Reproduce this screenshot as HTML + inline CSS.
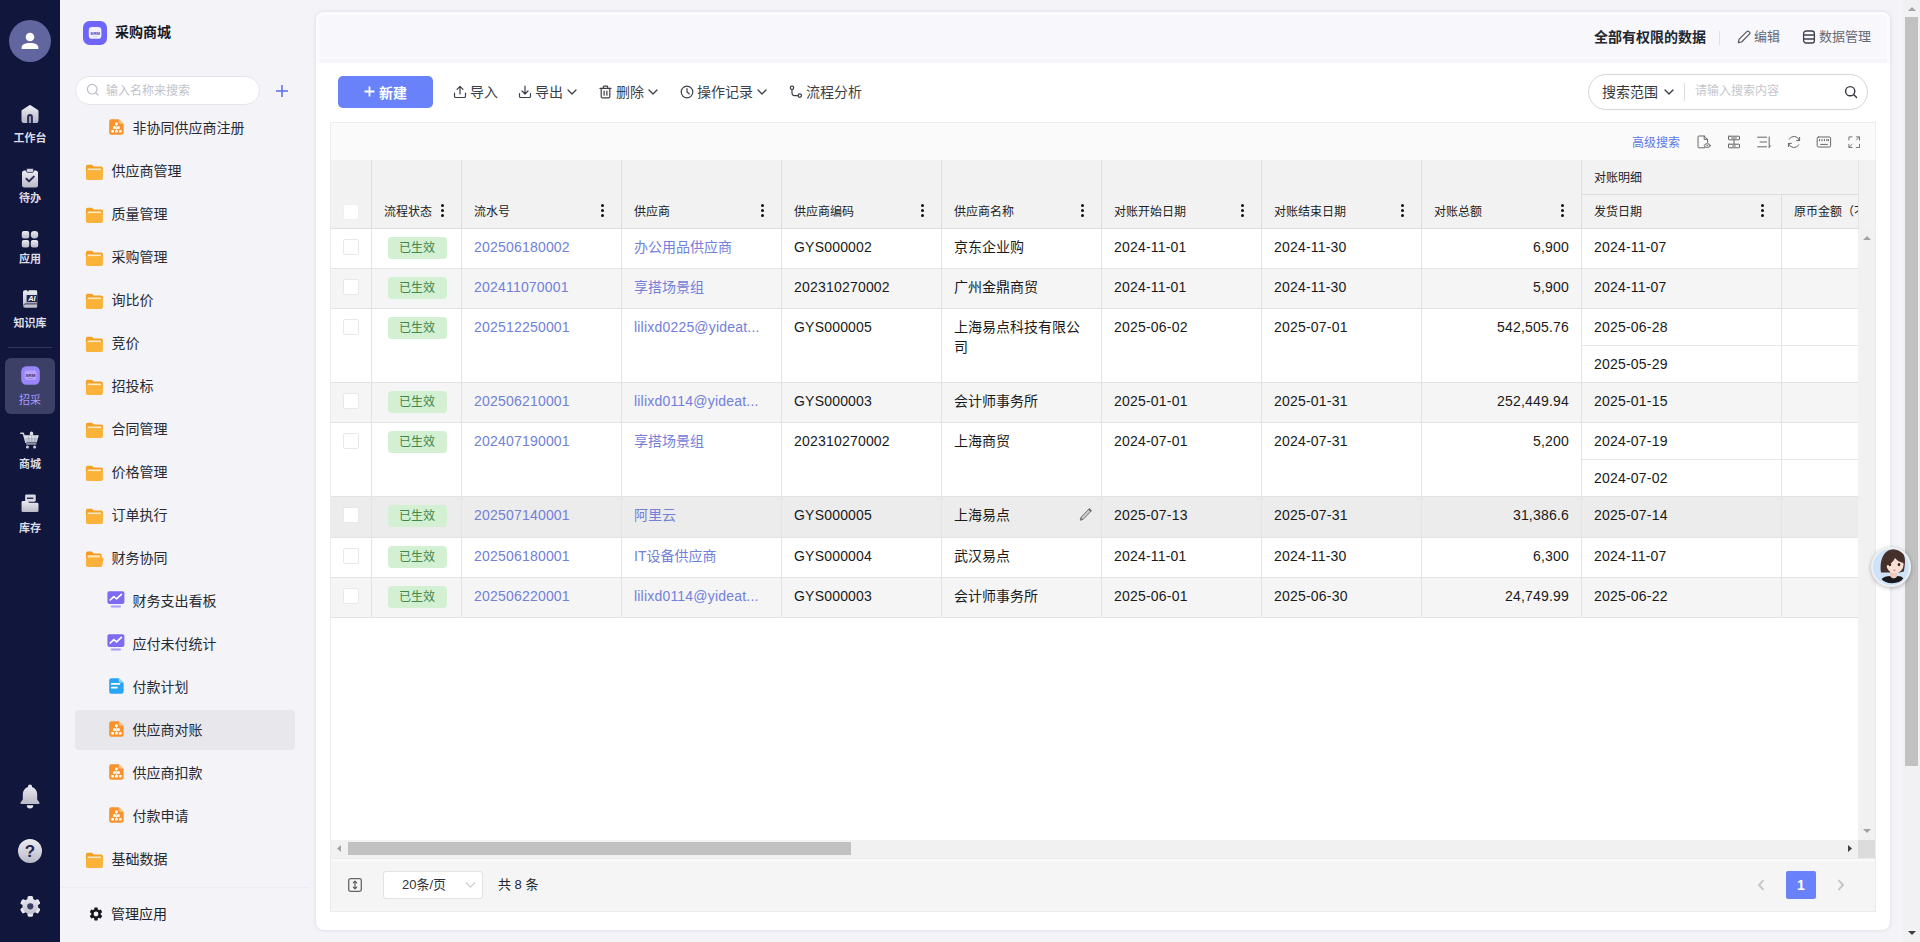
<!DOCTYPE html>
<html lang="zh-CN">
<head>
<meta charset="utf-8">
<title>采购商城 - 供应商对账</title>
<style>
*{box-sizing:border-box;margin:0;padding:0}
html,body{width:1920px;height:942px;overflow:hidden}
body{position:relative;background:#f3f3f8;font-family:"Liberation Sans","Noto Sans CJK SC",sans-serif;font-size:14px;color:#1f2329}
.abs{position:absolute}
svg{display:block}
/* ---------- dark rail ---------- */
#rail{position:absolute;left:0;top:0;width:60px;height:942px;background:#11163c}
#rail .avatar{position:absolute;left:9px;top:20px;width:42px;height:42px;border-radius:50%;background:#61669f}
#rail .item{position:absolute;left:0;width:60px;text-align:center;color:#dcdde7;font-size:11px;font-weight:bold;line-height:14px}
#rail .item svg{margin:0 auto 3px}
#rail .active{position:absolute;left:5px;top:358px;width:50px;height:56px;border-radius:6px;background:#3d4066}
#rail .sep{position:absolute;left:8px;top:347px;width:44px;height:1px;background:#33375f}
/* ---------- tree sidebar ---------- */
#side{position:absolute;left:60px;top:0;width:250px;height:942px;background:#f3f3f8}
#side .logo{position:absolute;left:23px;top:21px;width:24px;height:24px;border-radius:6.500px;background:#6e66fb}
#side .title{position:absolute;left:55px;top:21px;font-size:14px;font-weight:bold;color:#15171f;line-height:22px}
#side .search{position:absolute;left:15px;top:75.500px;width:184.500px;height:29px;border-radius:15px;background:#fff;border:1px solid #e4e5ec}
#side .search span{position:absolute;left:30px;top:0;line-height:28px;font-size:12px;color:#c0c3cc}
#side .node{position:absolute;left:15px;width:220px;height:40px;line-height:40px;font-size:14px;color:#272a32;border-radius:4px}
#side .node .ic{position:absolute;top:11.500px}
#side .node .tx{position:absolute;top:0}
#side .lvl1 .ic{left:10.300px;top:13.200px}
#side .lvl1 .tx{left:36.600px}
#side .lvl2 .ic{left:33.600px;top:10.800px;width:15.300px;height:16.300px}
#side .lvl2 .ic.pp{left:32.200px;top:10.400px;width:18px;height:17px}
#side .lvl2 .tx{left:57.600px}
#side .sel{background:#e7e7ec}
#side .bottom{position:absolute;left:0;top:887px;width:250px;height:55px;border-top:1px solid #ececf2}
/* ---------- main card ---------- */
#card{position:absolute;left:316px;top:12px;width:1574px;height:918px;background:#fff;border-radius:8px;box-shadow:0 0 4px rgba(40,42,80,.13)}
#card .head{position:absolute;left:0;top:0;width:100%;height:51px;background:#f7f7fb;border-radius:8px 8px 0 0;border:3px solid #fcfcfe;border-bottom:0;background:linear-gradient(#f7f7fc 0,#f7f7fc 42px,#fbfbfe 42px,#fbfbfe 44.500px,#f6f6fa 44.500px,#f6f6fa 100%)}
.tb{position:absolute;top:64px;height:31px;line-height:31px;font-size:14px;color:#3a3d45;white-space:nowrap}
.tb svg{display:inline-block;vertical-align:-2px;margin-right:3px}
#grid{position:absolute;left:14px;top:110px;width:1546px;height:790px;border:1px solid #ececec;background:#fff}
#grid .gt{position:absolute;left:0;top:0;width:100%;height:37px;background:#fafafa}
#grid .hd{position:absolute;left:0;top:37px;width:1544px;height:69px;background:#f2f2f2;border-bottom:1px solid #dedede}
.hc{position:absolute;top:0;height:68px;border-right:1px solid #dedede}
.hc .l{position:absolute;left:12px;top:44px;font-size:12px;line-height:16px;color:#222;white-space:nowrap}
.hc .m{position:absolute;right:16px;top:44px;width:4px;height:14px}
.hc .m i{display:block;width:3px;height:3px;border-radius:50%;background:#111;margin-bottom:2px}
.row{position:absolute;left:0;width:1527px;border-bottom:1px solid #e3e3e3;background:#fff}
.row.alt{background:#f5f5f5}
.row.hov{background:#ececec}
.c{position:absolute;top:0;height:100%;border-right:1px solid #e3e3e3;font-size:14px;line-height:20px;padding:8px 12px 0 12px;color:#1a1a1a;white-space:nowrap;overflow:hidden}
.c.r{text-align:right}
.n{letter-spacing:.200px}
.c.lk{color:#7280da}
.cb{position:absolute;left:12px;top:10px;width:16px;height:16px;border:1px solid #e8e8e8;border-radius:2px;background:#fff}
.tag{position:absolute;left:15.500px;top:8px;width:59px;height:22px;line-height:23px;border-radius:4px;background:#d3f1d2;color:#43854a;font-size:12px;text-align:center}
.sub{position:absolute;left:0;width:100%;height:37px;padding:8px 12px 0 12px;line-height:20px}
.sub.b{border-bottom:1px solid #e8e8e8}
#foot{position:absolute;left:0;top:735px;width:1544px;height:53px;background:#f5f5f5;font-size:13px;color:#222;box-shadow:inset 0 1px 0 #eaeaea,inset 0 3px 0 #fafafa}
</style>
</head>
<body>
<svg width="0" height="0" style="position:absolute"><defs>
<linearGradient id="gg" x1="0" y1="0" x2="0" y2="1"><stop offset="0" stop-color="#ececf2"/><stop offset="1" stop-color="#b9bac8"/></linearGradient>
<linearGradient id="gg2" gradientUnits="userSpaceOnUse" x1="0" y1="-11" x2="0" y2="11"><stop offset="0" stop-color="#ececf2"/><stop offset="1" stop-color="#b9bac8"/></linearGradient>
</defs></svg>
<div id="rail">
  <div class="avatar"><svg width="42" height="42" viewBox="0 0 42 42"><circle cx="21" cy="17" r="4.300" fill="#fff"/><path d="M12.600 29v-1.200c0-3 2.800-4.700 8.400-4.700s8.400 1.700 8.400 4.700V29z" fill="#fff"/></svg></div>

  <div class="item" style="top:104px"><svg width="20" height="20" viewBox="0 0 20 20"><path d="M10 2.200 17.300 7v9.800a1 1 0 0 1-1 1H3.700a1 1 0 0 1-1-1V7z" fill="url(#gg)" stroke="url(#gg)" stroke-width="2.400" stroke-linejoin="round"/><path d="M7.100 19v-6.200a2.900 2.900 0 0 1 5.800 0V19z" fill="#2a2d55"/><path d="M9 19v-6a1 1 0 0 1 2 0v6z" fill="#9d9fb6"/></svg></div>
  <div class="item" style="top:131px">工作台</div>

  <div class="item" style="top:168px"><svg width="18" height="20" viewBox="0 0 18 20"><rect x="1" y="2.500" width="16" height="17" rx="2.500" fill="url(#gg)"/><rect x="5.500" y=".6" width="7" height="3.800" rx="1.200" fill="#d9dae3" stroke="#2a2d55" stroke-width=".8"/><path d="M5.400 10.800 8 13.400l4.800-4.800" fill="none" stroke="#2a2d55" stroke-width="2" stroke-linecap="round" stroke-linejoin="round"/></svg></div>
  <div class="item" style="top:191px">待办</div>

  <div class="item" style="top:230px"><svg width="18" height="18" viewBox="0 0 18 18"><rect x=".8" y="1" width="7.400" height="7.400" rx="2" fill="url(#gg)"/><rect x="9.800" y="1" width="7.400" height="7.400" rx="3.400" fill="url(#gg)"/><rect x=".8" y="10" width="7.400" height="7.400" rx="2" fill="url(#gg)"/><rect x="9.800" y="10" width="7.400" height="7.400" rx="2" fill="url(#gg)"/></svg></div>
  <div class="item" style="top:252px">应用</div>

  <div class="item" style="top:289px"><svg width="18" height="20" viewBox="0 0 18 20"><path d="M3.800 1.200H6l1 1.600 1-1.600h6.800A1.400 1.400 0 0 1 16.200 2.600v14.800a1.400 1.400 0 0 1-1.400 1.400H4.400A2.400 2.400 0 0 1 2 16.400V3a1.800 1.800 0 0 1 1.800-1.800z" fill="url(#gg)"/><path d="M2.600 16.600c.2-1.200 1-1.700 2.200-1.700h11.400" fill="none" stroke="#2a2d55" stroke-width="1"/><rect x="5.600" y="6" width="10.600" height="7.200" fill="#23264d"/><text x="10.900" y="12.300" font-family="Liberation Sans,sans-serif" font-size="7.400" font-weight="bold" font-style="italic" text-anchor="middle" fill="#fff">AI</text></svg></div>
  <div class="item" style="top:316px">知识库</div>

  <div class="sep"></div>
  <div class="active"></div>
  <div class="item" style="top:366px"><svg width="19" height="19" viewBox="0 0 19 19"><rect x=".2" y=".2" width="18.600" height="18.600" rx="5.200" fill="#9a86fb"/><rect x="3.600" y="4.600" width="11.800" height="9.400" rx="2.400" fill="#b6a6ff"/><text x="9.500" y="10.900" font-family="Liberation Sans,sans-serif" font-size="4.400" font-weight="bold" text-anchor="middle" fill="#39306e">SRM</text><rect x="7" y="12" width="5" height=".7" fill="#8f7cf0"/></svg></div>
  <div class="item" style="top:393px;color:#a898ff;font-weight:normal">招采</div>

  <div class="item" style="top:431px"><svg width="19.500" height="18" viewBox="0 0 20 19" preserveAspectRatio="none"><path d="M.8 2.400h2.600l2.600 9.600" fill="none" stroke="#d4d5de" stroke-width="1.500" stroke-linecap="round" stroke-linejoin="round"/><path d="M4 4.400h15.200l-2 7.800H6z" fill="url(#gg)"/><path d="M11.800.4a1.700 1.700 0 0 1 1.700 1.700v2.300h-3.400V2.100A1.700 1.700 0 0 1 11.800.4z" fill="#dddee6"/><path d="M8.500 4.600l.6 7.400M12 4.600v7.400M15.500 4.600l-.7 7.400M5 8.200h13" stroke="#9a9cb2" stroke-width=".6"/><path d="M6.200 13h10.600v1.300H6.200z" fill="#c3c4d0"/><circle cx="7.600" cy="16.900" r="1.600" fill="#c9cad5"/><circle cx="15" cy="16.900" r="1.600" fill="#c9cad5"/></svg></div>
  <div class="item" style="top:457px">商城</div>

  <div class="item" style="top:494px"><svg width="17.500" height="18.500" viewBox="0 0 19 19" preserveAspectRatio="none"><rect x="4.500" y=".4" width="11.500" height="7.600" rx="1.500" fill="#d9dae3"/><rect x="6.500" y="3.600" width="7" height="1.600" rx=".6" fill="#2a2d55"/><path d="M.6 8.600a1.500 1.500 0 0 1 1.500-1.500h5l1.600 2h8.800a1.500 1.500 0 0 1 1.500 1.500v6.500a1.500 1.500 0 0 1-1.500 1.500H2.100A1.500 1.500 0 0 1 .6 17.100z" fill="url(#gg)"/></svg></div>
  <div class="item" style="top:521px">库存</div>

  <div class="item" style="top:784px"><svg width="22" height="25" viewBox="0 0 22 25"><path d="M11 .6a2 2 0 0 1 2 2v.5c3.200.9 5.200 3.700 5.200 7.200v5.200l2.200 2.900c.5.700.1 1.500-.7 1.500H2.300c-.8 0-1.200-.8-.7-1.500l2.200-2.900v-5.200c0-3.500 2-6.300 5.200-7.200v-.5a2 2 0 0 1 2-2z" fill="url(#gg)"/><path d="M7.800 21.300h6.400a3.200 3.200 0 0 1-6.400 0z" fill="#e5e6ec"/></svg></div>
  <div class="item" style="top:839px"><svg width="24" height="24" viewBox="0 0 24 24"><circle cx="12" cy="12" r="12" fill="url(#gg)"/><text x="12" y="18" font-family="Liberation Sans,sans-serif" font-size="17" font-weight="bold" text-anchor="middle" fill="#23264d">?</text></svg></div>
  <div class="item" style="top:894.700px"><svg width="22.600" height="22.600" viewBox="-12 -12 24 24"><g fill="url(#gg2)"><rect x="-3" y="-11" width="6" height="8" rx="1.700" transform="rotate(0)"/><rect x="-3" y="-11" width="6" height="8" rx="1.700" transform="rotate(60)"/><rect x="-3" y="-11" width="6" height="8" rx="1.700" transform="rotate(120)"/><rect x="-3" y="-11" width="6" height="8" rx="1.700" transform="rotate(180)"/><rect x="-3" y="-11" width="6" height="8" rx="1.700" transform="rotate(240)"/><rect x="-3" y="-11" width="6" height="8" rx="1.700" transform="rotate(300)"/><circle r="8.300"/></g><circle r="3.300" fill="#3a3d66"/></svg></div>
</div>
<div id="side">
  <div class="logo"><svg width="24" height="24" viewBox="0 0 24 24"><rect x="5.800" y="6" width="12.600" height="11.800" rx="3.400" fill="#f3f0ff"/><text x="12.100" y="13.900" font-family="Liberation Sans,sans-serif" font-size="4.400" font-weight="bold" text-anchor="middle" fill="#4a3fb5">SRM</text><rect x="10" y="15.200" width="4.200" height=".6" fill="#c9c3f5"/></svg></div>
  <div class="title">采购商城</div>
  <div class="search"><svg style="position:absolute;left:10px;top:6.500px" width="14" height="14" viewBox="0 0 14 14"><circle cx="6.200" cy="6.200" r="4.800" fill="none" stroke="#b9bcc6" stroke-width="1.200"/><path d="M9.700 9.700l2.300 2.300" stroke="#b9bcc6" stroke-width="1.200" stroke-linecap="round"/></svg><span>输入名称来搜索</span></div>
  <svg style="position:absolute;left:215px;top:84px" width="14" height="14" viewBox="0 0 14 14"><path d="M7 1v12M1 7h12" stroke="#5b6fe6" stroke-width="1.500"/></svg>
  <div class="node lvl2" style="top:108px"><svg class="ic" width="16" height="17" viewBox="0 0 16 17"><path d="M2.400.3h7.800L15.300 5v9.300a2.200 2.200 0 0 1-2.200 2.200H2.400A2.200 2.200 0 0 1 .2 14.300V2.500A2.200 2.200 0 0 1 2.400.3z" fill="#f7922d"/><path d="M10.200.3 15.300 5h-3.600a1.500 1.500 0 0 1-1.500-1.500z" fill="#fbbf85"/><g fill="#fff"><rect x="6.400" y="3.600" width="2.800" height="2.700" rx=".6"/><rect x="4.400" y="7.600" width="2.800" height="2.700" rx=".6"/><rect x="8.400" y="7.600" width="2.800" height="2.700" rx=".6"/><rect x="2.400" y="11.500" width="2.800" height="2.700" rx=".6"/><rect x="6.400" y="11.500" width="2.800" height="2.700" rx=".6"/><rect x="10.400" y="11.500" width="2.800" height="2.700" rx=".6"/><rect x="7.400" y="5" width=".8" height="7" opacity=".8"/><rect x="4" y="9.400" width="7.600" height=".7" opacity=".7"/></g></svg><span class="tx">非协同供应商注册</span></div>
  <div class="node lvl1" style="top:151px"><svg class="ic" width="19" height="17" viewBox="0 0 19 17"><path d="M.9 4.300h15.300A1.700 1.700 0 0 1 17.900 6v8.300a1.700 1.700 0 0 1-1.700 1.700H2.600A1.700 1.700 0 0 1 .9 14.300z" fill="#fab338"/><path d="M.9 2.400A1.700 1.700 0 0 1 2.600.7h3.800c.6 0 1 .2 1.400.7l1 1.200h7.400a1.700 1.700 0 0 1 1.700 1.700v1.600H.9z" fill="#f5a128"/><rect x="2.600" y="4.400" width="13.600" height="1.900" rx=".4" fill="#fdebc8"/><path d="M.9 6.300h17v.8H.9z" fill="#fab338"/></svg><span class="tx">供应商管理</span></div>
  <div class="node lvl1" style="top:194px"><svg class="ic" width="19" height="17" viewBox="0 0 19 17"><path d="M.9 4.300h15.300A1.700 1.700 0 0 1 17.900 6v8.300a1.700 1.700 0 0 1-1.700 1.700H2.600A1.700 1.700 0 0 1 .9 14.300z" fill="#fab338"/><path d="M.9 2.400A1.700 1.700 0 0 1 2.600.7h3.800c.6 0 1 .2 1.400.7l1 1.200h7.400a1.700 1.700 0 0 1 1.700 1.700v1.600H.9z" fill="#f5a128"/><rect x="2.600" y="4.400" width="13.600" height="1.900" rx=".4" fill="#fdebc8"/><path d="M.9 6.300h17v.8H.9z" fill="#fab338"/></svg><span class="tx">质量管理</span></div>
  <div class="node lvl1" style="top:237px"><svg class="ic" width="19" height="17" viewBox="0 0 19 17"><path d="M.9 4.300h15.300A1.700 1.700 0 0 1 17.900 6v8.300a1.700 1.700 0 0 1-1.700 1.700H2.600A1.700 1.700 0 0 1 .9 14.300z" fill="#fab338"/><path d="M.9 2.400A1.700 1.700 0 0 1 2.600.7h3.800c.6 0 1 .2 1.400.7l1 1.200h7.400a1.700 1.700 0 0 1 1.700 1.700v1.600H.9z" fill="#f5a128"/><rect x="2.600" y="4.400" width="13.600" height="1.900" rx=".4" fill="#fdebc8"/><path d="M.9 6.300h17v.8H.9z" fill="#fab338"/></svg><span class="tx">采购管理</span></div>
  <div class="node lvl1" style="top:280px"><svg class="ic" width="19" height="17" viewBox="0 0 19 17"><path d="M.9 4.300h15.300A1.700 1.700 0 0 1 17.900 6v8.300a1.700 1.700 0 0 1-1.700 1.700H2.600A1.700 1.700 0 0 1 .9 14.300z" fill="#fab338"/><path d="M.9 2.400A1.700 1.700 0 0 1 2.600.7h3.800c.6 0 1 .2 1.400.7l1 1.200h7.400a1.700 1.700 0 0 1 1.700 1.700v1.600H.9z" fill="#f5a128"/><rect x="2.600" y="4.400" width="13.600" height="1.900" rx=".4" fill="#fdebc8"/><path d="M.9 6.300h17v.8H.9z" fill="#fab338"/></svg><span class="tx">询比价</span></div>
  <div class="node lvl1" style="top:323px"><svg class="ic" width="19" height="17" viewBox="0 0 19 17"><path d="M.9 4.300h15.300A1.700 1.700 0 0 1 17.900 6v8.300a1.700 1.700 0 0 1-1.700 1.700H2.600A1.700 1.700 0 0 1 .9 14.300z" fill="#fab338"/><path d="M.9 2.400A1.700 1.700 0 0 1 2.600.7h3.800c.6 0 1 .2 1.400.7l1 1.200h7.400a1.700 1.700 0 0 1 1.700 1.700v1.600H.9z" fill="#f5a128"/><rect x="2.600" y="4.400" width="13.600" height="1.900" rx=".4" fill="#fdebc8"/><path d="M.9 6.300h17v.8H.9z" fill="#fab338"/></svg><span class="tx">竞价</span></div>
  <div class="node lvl1" style="top:366px"><svg class="ic" width="19" height="17" viewBox="0 0 19 17"><path d="M.9 4.300h15.300A1.700 1.700 0 0 1 17.900 6v8.300a1.700 1.700 0 0 1-1.700 1.700H2.600A1.700 1.700 0 0 1 .9 14.300z" fill="#fab338"/><path d="M.9 2.400A1.700 1.700 0 0 1 2.600.7h3.800c.6 0 1 .2 1.400.7l1 1.200h7.400a1.700 1.700 0 0 1 1.700 1.700v1.600H.9z" fill="#f5a128"/><rect x="2.600" y="4.400" width="13.600" height="1.900" rx=".4" fill="#fdebc8"/><path d="M.9 6.300h17v.8H.9z" fill="#fab338"/></svg><span class="tx">招投标</span></div>
  <div class="node lvl1" style="top:409px"><svg class="ic" width="19" height="17" viewBox="0 0 19 17"><path d="M.9 4.300h15.300A1.700 1.700 0 0 1 17.900 6v8.300a1.700 1.700 0 0 1-1.700 1.700H2.600A1.700 1.700 0 0 1 .9 14.300z" fill="#fab338"/><path d="M.9 2.400A1.700 1.700 0 0 1 2.600.7h3.800c.6 0 1 .2 1.400.7l1 1.200h7.400a1.700 1.700 0 0 1 1.700 1.700v1.600H.9z" fill="#f5a128"/><rect x="2.600" y="4.400" width="13.600" height="1.900" rx=".4" fill="#fdebc8"/><path d="M.9 6.300h17v.8H.9z" fill="#fab338"/></svg><span class="tx">合同管理</span></div>
  <div class="node lvl1" style="top:452px"><svg class="ic" width="19" height="17" viewBox="0 0 19 17"><path d="M.9 4.300h15.300A1.700 1.700 0 0 1 17.900 6v8.300a1.700 1.700 0 0 1-1.700 1.700H2.600A1.700 1.700 0 0 1 .9 14.300z" fill="#fab338"/><path d="M.9 2.400A1.700 1.700 0 0 1 2.600.7h3.800c.6 0 1 .2 1.400.7l1 1.200h7.400a1.700 1.700 0 0 1 1.700 1.700v1.600H.9z" fill="#f5a128"/><rect x="2.600" y="4.400" width="13.600" height="1.900" rx=".4" fill="#fdebc8"/><path d="M.9 6.300h17v.8H.9z" fill="#fab338"/></svg><span class="tx">价格管理</span></div>
  <div class="node lvl1" style="top:495px"><svg class="ic" width="19" height="17" viewBox="0 0 19 17"><path d="M.9 4.300h15.300A1.700 1.700 0 0 1 17.900 6v8.300a1.700 1.700 0 0 1-1.700 1.700H2.600A1.700 1.700 0 0 1 .9 14.300z" fill="#fab338"/><path d="M.9 2.400A1.700 1.700 0 0 1 2.600.7h3.800c.6 0 1 .2 1.400.7l1 1.200h7.400a1.700 1.700 0 0 1 1.700 1.700v1.600H.9z" fill="#f5a128"/><rect x="2.600" y="4.400" width="13.600" height="1.900" rx=".4" fill="#fdebc8"/><path d="M.9 6.300h17v.8H.9z" fill="#fab338"/></svg><span class="tx">订单执行</span></div>
  <div class="node lvl1" style="top:538px"><svg class="ic" width="19" height="17" viewBox="0 0 19 17"><path d="M1 2.200A1.700 1.700 0 0 1 2.700.5h4.100l1.900 2.100h6.300a1.700 1.700 0 0 1 1.700 1.700v3H1z" fill="#f39a1f"/><rect x="2.600" y="4.200" width="12.600" height="4" fill="#fde2b0"/><path d="M2.300 6.600h14.900c1 0 1.500.7 1.300 1.600l-1.200 6.300c-.2.900-.9 1.500-1.800 1.500H2.700A1.700 1.700 0 0 1 1 14.300V8.100c0-.9.500-1.500 1.300-1.500z" fill="#fbb03a"/></svg><span class="tx">财务协同</span></div>
  <div class="node lvl2" style="top:581px"><svg class="ic pp" width="18" height="17" viewBox="0 0 18 17"><rect x=".4" y=".3" width="17" height="12.600" rx="1.800" fill="#7d6cf0"/><path d="M3.200 9 6.800 5.600 9.600 7.800 14.400 3.400" fill="none" stroke="#fff" stroke-width="1.700" stroke-linecap="round" stroke-linejoin="round"/><rect x="3.800" y="14.500" width="10.200" height="1.900" rx=".9" fill="#a79cf6"/></svg><span class="tx">财务支出看板</span></div>
  <div class="node lvl2" style="top:624px"><svg class="ic pp" width="18" height="17" viewBox="0 0 18 17"><rect x=".4" y=".3" width="17" height="12.600" rx="1.800" fill="#7d6cf0"/><path d="M3.200 9 6.800 5.600 9.600 7.800 14.400 3.400" fill="none" stroke="#fff" stroke-width="1.700" stroke-linecap="round" stroke-linejoin="round"/><rect x="3.800" y="14.500" width="10.200" height="1.900" rx=".9" fill="#a79cf6"/></svg><span class="tx">应付未付统计</span></div>
  <div class="node lvl2" style="top:667px"><svg class="ic" width="16" height="17" viewBox="0 0 16 17"><path d="M2.400.3h7.800L15.300 5v9.300a2.200 2.200 0 0 1-2.200 2.200H2.400A2.200 2.200 0 0 1 .2 14.300V2.500A2.200 2.200 0 0 1 2.400.3z" fill="#2aa4f4"/><path d="M10.200.3 15.300 5h-3.600a1.500 1.500 0 0 1-1.500-1.500z" fill="#8fd0fa"/><rect x="1.900" y="5.300" width="9.800" height="1.800" rx=".9" fill="#fff"/><rect x="1.900" y="9.100" width="7.300" height="1.800" rx=".9" fill="#fff"/></svg><span class="tx">付款计划</span></div>
  <div class="node lvl2 sel" style="top:710px"><svg class="ic" width="16" height="17" viewBox="0 0 16 17"><path d="M2.400.3h7.800L15.300 5v9.300a2.200 2.200 0 0 1-2.200 2.200H2.400A2.200 2.200 0 0 1 .2 14.300V2.500A2.200 2.200 0 0 1 2.400.3z" fill="#f7922d"/><path d="M10.200.3 15.300 5h-3.600a1.500 1.500 0 0 1-1.500-1.500z" fill="#fbbf85"/><g fill="#fff"><rect x="6.400" y="3.600" width="2.800" height="2.700" rx=".6"/><rect x="4.400" y="7.600" width="2.800" height="2.700" rx=".6"/><rect x="8.400" y="7.600" width="2.800" height="2.700" rx=".6"/><rect x="2.400" y="11.500" width="2.800" height="2.700" rx=".6"/><rect x="6.400" y="11.500" width="2.800" height="2.700" rx=".6"/><rect x="10.400" y="11.500" width="2.800" height="2.700" rx=".6"/><rect x="7.400" y="5" width=".8" height="7" opacity=".8"/><rect x="4" y="9.400" width="7.600" height=".7" opacity=".7"/></g></svg><span class="tx">供应商对账</span></div>
  <div class="node lvl2" style="top:753px"><svg class="ic" width="16" height="17" viewBox="0 0 16 17"><path d="M2.400.3h7.800L15.300 5v9.300a2.200 2.200 0 0 1-2.200 2.200H2.400A2.200 2.200 0 0 1 .2 14.300V2.500A2.200 2.200 0 0 1 2.400.3z" fill="#f7922d"/><path d="M10.200.3 15.300 5h-3.600a1.500 1.500 0 0 1-1.500-1.500z" fill="#fbbf85"/><g fill="#fff"><rect x="6.400" y="3.600" width="2.800" height="2.700" rx=".6"/><rect x="4.400" y="7.600" width="2.800" height="2.700" rx=".6"/><rect x="8.400" y="7.600" width="2.800" height="2.700" rx=".6"/><rect x="2.400" y="11.500" width="2.800" height="2.700" rx=".6"/><rect x="6.400" y="11.500" width="2.800" height="2.700" rx=".6"/><rect x="10.400" y="11.500" width="2.800" height="2.700" rx=".6"/><rect x="7.400" y="5" width=".8" height="7" opacity=".8"/><rect x="4" y="9.400" width="7.600" height=".7" opacity=".7"/></g></svg><span class="tx">供应商扣款</span></div>
  <div class="node lvl2" style="top:796px"><svg class="ic" width="16" height="17" viewBox="0 0 16 17"><path d="M2.400.3h7.800L15.300 5v9.300a2.200 2.200 0 0 1-2.200 2.200H2.400A2.200 2.200 0 0 1 .2 14.300V2.500A2.200 2.200 0 0 1 2.400.3z" fill="#f7922d"/><path d="M10.200.3 15.300 5h-3.600a1.500 1.500 0 0 1-1.500-1.500z" fill="#fbbf85"/><g fill="#fff"><rect x="6.400" y="3.600" width="2.800" height="2.700" rx=".6"/><rect x="4.400" y="7.600" width="2.800" height="2.700" rx=".6"/><rect x="8.400" y="7.600" width="2.800" height="2.700" rx=".6"/><rect x="2.400" y="11.500" width="2.800" height="2.700" rx=".6"/><rect x="6.400" y="11.500" width="2.800" height="2.700" rx=".6"/><rect x="10.400" y="11.500" width="2.800" height="2.700" rx=".6"/><rect x="7.400" y="5" width=".8" height="7" opacity=".8"/><rect x="4" y="9.400" width="7.600" height=".7" opacity=".7"/></g></svg><span class="tx">付款申请</span></div>
  <div class="node lvl1" style="top:839px"><svg class="ic" width="19" height="17" viewBox="0 0 19 17"><path d="M.9 4.300h15.300A1.700 1.700 0 0 1 17.900 6v8.300a1.700 1.700 0 0 1-1.700 1.700H2.600A1.700 1.700 0 0 1 .9 14.300z" fill="#fab338"/><path d="M.9 2.400A1.700 1.700 0 0 1 2.600.7h3.800c.6 0 1 .2 1.400.7l1 1.200h7.400a1.700 1.700 0 0 1 1.700 1.700v1.600H.9z" fill="#f5a128"/><rect x="2.600" y="4.400" width="13.600" height="1.900" rx=".4" fill="#fdebc8"/><path d="M.9 6.300h17v.8H.9z" fill="#fab338"/></svg><span class="tx">基础数据</span></div>
  <div class="bottom"><svg style="position:absolute;left:27.500px;top:17.600px" width="16" height="16" viewBox="0 0 24 24"><path d="M19.140 12.940c.04-.3.060-.61.060-.94 0-.32-.02-.64-.07-.94l2.030-1.580a.49.49 0 0 0 .12-.61l-1.920-3.320a.488.488 0 0 0-.59-.22l-2.390.96c-.5-.38-1.030-.7-1.620-.94l-.36-2.540a.484.484 0 0 0-.48-.41h-3.840c-.24 0-.43.170-.47.410l-.36 2.540c-.59.240-1.130.570-1.620.94l-2.390-.96c-.22-.08-.47 0-.59.220L2.740 8.870c-.12.210-.08.470.12.610l2.030 1.580c-.05.300-.09.630-.09.940s.02.640.07.940l-2.030 1.580a.49.49 0 0 0-.12.610l1.920 3.320c.12.220.37.290.59.220l2.390-.96c.5.380 1.030.7 1.620.94l.36 2.540c.05.240.24.410.48.410h3.840c.24 0 .44-.17.470-.41l.36-2.540c.59-.24 1.130-.56 1.620-.94l2.390.96c.22.080.47 0 .59-.22l1.920-3.320c.12-.22.070-.47-.12-.61l-2.010-1.580zM12 15.600A3.600 3.600 0 1 1 12 8.400a3.600 3.600 0 0 1 0 7.200z" fill="#15171f"/></svg><span style="position:absolute;left:51px;top:15px;line-height:22px;font-size:14px;color:#20232b">管理应用</span></div>
</div>
<div id="card">
  <div class="head"></div>
  <div class="abs" style="left:1278px;top:14px;line-height:22px;font-size:14px;font-weight:bold;color:#23262f;white-space:nowrap">全部有权限的数据</div>
  <div class="abs" style="left:1403px;top:19px;width:1px;height:14px;background:#e1e2e8"></div>
  <svg class="abs" style="left:1421px;top:18px" width="14" height="14" viewBox="0 0 14 14"><path d="M9.800 1.600a1.500 1.500 0 0 1 2.100 0l.5.500a1.500 1.500 0 0 1 0 2.100L4.600 12l-3.200.600.600-3.200z" fill="none" stroke="#555861" stroke-width="1.200" stroke-linejoin="round"/></svg>
  <div class="abs" style="left:1438px;top:14px;line-height:22px;font-size:13px;color:#666973;white-space:nowrap">编辑</div>
  <svg class="abs" style="left:1486px;top:18px" width="14" height="14" viewBox="0 0 14 14"><rect x="1.600" y="1" width="10.800" height="12" rx="2.600" fill="none" stroke="#3f424b" stroke-width="1.300"/><path d="M1.600 5h10.800M1.600 9h10.800" stroke="#3f424b" stroke-width="1.300"/></svg>
  <div class="abs" style="left:1503px;top:14px;line-height:22px;font-size:13px;color:#666973;white-space:nowrap">数据管理</div>
  <div class="abs" style="left:22px;top:64px;width:95px;height:32px;border-radius:5px;background:#6982fa"></div>
  <svg class="abs" style="left:48px;top:74.300px" width="11" height="11" viewBox="0 0 11 11"><path d="M5.500 .5v10M.5 5.500h10" stroke="#fff" stroke-width="1.800"/></svg>
  <div class="abs" style="left:63px;top:70px;line-height:22px;font-size:14px;font-weight:bold;color:#fff;white-space:nowrap">新建</div>
  <svg class="abs" style="left:137px;top:73px" width="14" height="14" viewBox="0 0 14 14"><path d="M7 9V1.600M4 4.400l3-3 3 3M1.500 8v3.200a1.300 1.300 0 0 0 1.300 1.300h8.400a1.300 1.300 0 0 0 1.300-1.300V8" fill="none" stroke="#3c3f47" stroke-width="1.200" stroke-linecap="round" stroke-linejoin="round"/></svg>
  <div class="abs" style="left:154px;top:69px;line-height:22px;font-size:14px;color:#3c3f47;white-space:nowrap">导入</div>
  <svg class="abs" style="left:202px;top:73px" width="14" height="14" viewBox="0 0 14 14"><path d="M7 1.200v7.400M4 6l3 3 3-3M1.500 8.600v2.600a1.300 1.300 0 0 0 1.300 1.300h8.400a1.300 1.300 0 0 0 1.300-1.300V8.600" fill="none" stroke="#3c3f47" stroke-width="1.200" stroke-linecap="round" stroke-linejoin="round"/></svg>
  <div class="abs" style="left:219px;top:69px;line-height:22px;font-size:14px;color:#3c3f47;white-space:nowrap">导出</div>
  <svg class="abs" style="left:251px;top:76px" width="10" height="8" viewBox="0 0 10 8"><path d="M1 2l4 4 4-4" fill="none" stroke="#3c3f47" stroke-width="1.300" stroke-linecap="round" stroke-linejoin="round"/></svg>
  <svg class="abs" style="left:283px;top:73px" width="13" height="14" viewBox="0 0 13 14"><path d="M1 3.400h11M4.300 3.200V2a.8.800 0 0 1 .8-.8h2.800a.8.800 0 0 1 .8.800v1.200M2.200 3.600v8a1.200 1.200 0 0 0 1.200 1.200h6.200a1.200 1.200 0 0 0 1.200-1.200v-8M5.100 6.200v4M7.900 6.200v4" fill="none" stroke="#3c3f47" stroke-width="1.200" stroke-linecap="round" stroke-linejoin="round"/></svg>
  <div class="abs" style="left:300px;top:69px;line-height:22px;font-size:14px;color:#3c3f47;white-space:nowrap">删除</div>
  <svg class="abs" style="left:332px;top:76px" width="10" height="8" viewBox="0 0 10 8"><path d="M1 2l4 4 4-4" fill="none" stroke="#3c3f47" stroke-width="1.300" stroke-linecap="round" stroke-linejoin="round"/></svg>
  <svg class="abs" style="left:364px;top:73px" width="14" height="14" viewBox="0 0 14 14"><circle cx="7" cy="7" r="5.800" fill="none" stroke="#3c3f47" stroke-width="1.200" stroke-linecap="round" stroke-linejoin="round"/><path d="M7 3.600V7l2.200 1.800" fill="none" stroke="#3c3f47" stroke-width="1.200" stroke-linecap="round" stroke-linejoin="round"/></svg>
  <div class="abs" style="left:381px;top:69px;line-height:22px;font-size:14px;color:#3c3f47;white-space:nowrap">操作记录</div>
  <svg class="abs" style="left:441px;top:76px" width="10" height="8" viewBox="0 0 10 8"><path d="M1 2l4 4 4-4" fill="none" stroke="#3c3f47" stroke-width="1.300" stroke-linecap="round" stroke-linejoin="round"/></svg>
  <svg class="abs" style="left:473px;top:73px" width="14" height="14" viewBox="0 0 14 14"><circle cx="3" cy="2.800" r="1.700" fill="none" stroke="#3c3f47" stroke-width="1.200" stroke-linecap="round" stroke-linejoin="round"/><circle cx="10.800" cy="10.600" r="1.700" fill="none" stroke="#3c3f47" stroke-width="1.200" stroke-linecap="round" stroke-linejoin="round"/><path d="M3 4.500v3.600a2.500 2.500 0 0 0 2.500 2.500h3.600" fill="none" stroke="#3c3f47" stroke-width="1.200" stroke-linecap="round" stroke-linejoin="round"/></svg>
  <div class="abs" style="left:490px;top:69px;line-height:22px;font-size:14px;color:#3c3f47;white-space:nowrap">流程分析</div>
  <div class="abs" style="left:1272px;top:62px;width:280px;height:36px;border-radius:18px;border:1px solid #d4d5da;background:#fff"></div>
  <div class="abs" style="left:1286px;top:69px;line-height:22px;font-size:14px;color:#33363d;white-space:nowrap">搜索范围</div>
  <svg class="abs" style="left:1348px;top:76px" width="10" height="8" viewBox="0 0 10 8"><path d="M1 2l4 4 4-4" fill="none" stroke="#33363d" stroke-width="1.300" stroke-linecap="round" stroke-linejoin="round"/></svg>
  <div class="abs" style="left:1368px;top:71px;width:1px;height:18px;background:#dcdde2"></div>
  <div class="abs" style="left:1379px;top:69px;line-height:20px;font-size:12px;color:#c5c6cb;white-space:nowrap">请输入搜索内容</div>
  <svg class="abs" style="left:1528px;top:73px" width="14" height="14" viewBox="0 0 14 14"><circle cx="6.200" cy="6.200" r="4.600" fill="none" stroke="#33363d" stroke-width="1.400"/><path d="M9.600 9.600l3 3" stroke="#33363d" stroke-width="1.400" stroke-linecap="round"/></svg>
  <div id="grid" style="left:14px;top:110px;width:1546px;height:790px">
    <div class="gt"></div>
    <div class="abs" style="left:1301px;top:11px;line-height:18px;font-size:12px;color:#5b78e8;white-space:nowrap">高级搜索</div>
    <svg class="abs" style="left:1366px;top:12px" width="14" height="14" viewBox="0 0 14 14"><path d="M7.600 12.800H2a1 1 0 0 1-1-1V2a1 1 0 0 1 1-1h5.200l3.400 3.400v3M7.200 1v3.400h3.400" fill="none" stroke="#666" stroke-width="1" stroke-linecap="round" stroke-linejoin="round"/><ellipse cx="10.300" cy="10.600" rx="3" ry="1.900" fill="none" stroke="#666" stroke-width="1" stroke-linecap="round" stroke-linejoin="round"/><circle cx="10.300" cy="10.600" r=".8" fill="#666"/></svg>
    <svg class="abs" style="left:1396px;top:12px" width="14" height="14" viewBox="0 0 14 14"><rect x="1.500" y="1.200" width="11" height="3.600" rx=".5" fill="none" stroke="#666" stroke-width="1" stroke-linecap="round" stroke-linejoin="round"/><rect x="1.500" y="9.200" width="11" height="3.600" rx=".5" fill="none" stroke="#666" stroke-width="1" stroke-linecap="round" stroke-linejoin="round"/><path d="M7 4.800v4.400M4.600 3h4.800M5.600 11h2.800" fill="none" stroke="#666" stroke-width="1" stroke-linecap="round" stroke-linejoin="round"/></svg>
    <svg class="abs" style="left:1426px;top:12px" width="15" height="14" viewBox="0 0 15 14"><path d="M.6 2.200h9M3 7h6.600M.6 11.800h9M12.200 2v10.200M12.200 12.400l1.400-1.700" fill="none" stroke="#666" stroke-width="1" stroke-linecap="round" stroke-linejoin="round"/></svg>
    <svg class="abs" style="left:1456px;top:12px" width="14" height="14" viewBox="0 0 14 14"><path d="M12.400 5.400A5.600 5.600 0 0 0 2.200 4.200M1.600 8.600a5.600 5.600 0 0 0 10.200 1.200M12.600 2.400v3.200H9.600M1.400 11.600V8.400h3" fill="none" stroke="#666" stroke-width="1" stroke-linecap="round" stroke-linejoin="round"/></svg>
    <svg class="abs" style="left:1485px;top:12px" width="16" height="14" viewBox="0 0 16 14"><rect x="1.200" y="2" width="13.400" height="10" rx="1.200" fill="none" stroke="#666" stroke-width="1" stroke-linecap="round" stroke-linejoin="round"/><path d="M3.600 4.400v1.400M6 4.400v1.400M8.400 4.400v1.400M10.800 4.400v1.400M12.400 4.400v1.400M4.600 9.400h6.800" fill="none" stroke="#666" stroke-width="1" stroke-linecap="round" stroke-linejoin="round"/></svg>
    <svg class="abs" style="left:1517px;top:12.800000000000011px" width="12.4" height="12.4" viewBox="0 0 14 14"><path d="M1 4.600V1h3.600M9.400 1H13v3.600M13 9.400V13H9.400M4.600 13H1V9.400M13 1 9.600 4.400M1 13l3.400-3.400" fill="none" stroke="#666" stroke-width="1" stroke-linecap="round" stroke-linejoin="round"/></svg>
    <div class="hd" style="width:1527px">
      <div class="hc" style="left:0px;width:41px"><span class="cb" style="top:44px;border-color:#f0f0f0"></span></div>
      <div class="hc" style="left:41px;width:90px"><span class="l">流程状态</span><span class="m"><i></i><i></i><i></i></span></div>
      <div class="hc" style="left:131px;width:160px"><span class="l">流水号</span><span class="m"><i></i><i></i><i></i></span></div>
      <div class="hc" style="left:291px;width:160px"><span class="l">供应商</span><span class="m"><i></i><i></i><i></i></span></div>
      <div class="hc" style="left:451px;width:160px"><span class="l">供应商编码</span><span class="m"><i></i><i></i><i></i></span></div>
      <div class="hc" style="left:611px;width:160px"><span class="l">供应商名称</span><span class="m"><i></i><i></i><i></i></span></div>
      <div class="hc" style="left:771px;width:160px"><span class="l">对账开始日期</span><span class="m"><i></i><i></i><i></i></span></div>
      <div class="hc" style="left:931px;width:160px"><span class="l">对账结束日期</span><span class="m"><i></i><i></i><i></i></span></div>
      <div class="hc" style="left:1091px;width:160px"><span class="l">对账总额</span><span class="m"><i></i><i></i><i></i></span></div>
      <div class="abs" style="left:1251px;top:0;width:276px;height:35px;border-bottom:1px solid #dedede"><span class="abs" style="left:12px;top:10px;font-size:12px;line-height:16px;color:#222;white-space:nowrap">对账明细</span></div>
      <div class="hc" style="left:1251px;top:35px;height:33px;width:200px"><span class="l" style="top:9px">发货日期</span><span class="m" style="top:9px"><i></i><i></i><i></i></span></div>
      <div class="hc" style="left:1451px;top:35px;height:33px;width:76px;border-right:0;overflow:hidden"><span class="l" style="top:9px">原币金额（不含税）</span></div>
    </div>
    <div class="row " style="top:106px;height:40px;width:1527px">
      <div class="c" style="left:0px;width:41px"><span class="cb"></span></div>
      <div class="c" style="left:41px;width:90px"><span class="tag">已生效</span></div>
      <div class="c lk n" style="left:131px;width:160px">202506180002</div>
      <div class="c lk" style="left:291px;width:160px">办公用品供应商</div>
      <div class="c n" style="left:451px;width:160px">GYS000002</div>
      <div class="c" style="left:611px;width:160px">京东企业购</div>
      <div class="c n" style="left:771px;width:160px">2024-11-01</div>
      <div class="c n" style="left:931px;width:160px">2024-11-30</div>
      <div class="c r n" style="left:1091px;width:160px">6,900</div>
      <div class="c" style="left:1251px;width:200px;padding:0"><div class="sub n" style="top:0px">2024-11-07</div></div>
    </div>
    <div class="row alt" style="top:146px;height:40px;width:1527px">
      <div class="c" style="left:0px;width:41px"><span class="cb"></span></div>
      <div class="c" style="left:41px;width:90px"><span class="tag">已生效</span></div>
      <div class="c lk n" style="left:131px;width:160px">202411070001</div>
      <div class="c lk" style="left:291px;width:160px">享搭场景组</div>
      <div class="c n" style="left:451px;width:160px">202310270002</div>
      <div class="c" style="left:611px;width:160px">广州金鼎商贸</div>
      <div class="c n" style="left:771px;width:160px">2024-11-01</div>
      <div class="c n" style="left:931px;width:160px">2024-11-30</div>
      <div class="c r n" style="left:1091px;width:160px">5,900</div>
      <div class="c" style="left:1251px;width:200px;padding:0"><div class="sub n" style="top:0px">2024-11-07</div></div>
    </div>
    <div class="row " style="top:186px;height:74px;width:1527px">
      <div class="c" style="left:0px;width:41px"><span class="cb"></span></div>
      <div class="c" style="left:41px;width:90px"><span class="tag">已生效</span></div>
      <div class="c lk n" style="left:131px;width:160px">202512250001</div>
      <div class="c lk n" style="left:291px;width:160px">lilixd0225@yideat...</div>
      <div class="c n" style="left:451px;width:160px">GYS000005</div>
      <div class="c" style="left:611px;width:160px">上海易点科技有限公<br>司</div>
      <div class="c n" style="left:771px;width:160px">2025-06-02</div>
      <div class="c n" style="left:931px;width:160px">2025-07-01</div>
      <div class="c r n" style="left:1091px;width:160px">542,505.76</div>
      <div class="c" style="left:1251px;width:200px;padding:0"><div class="sub b n" style="top:0px">2025-06-28</div><div class="sub n" style="top:37px">2025-05-29</div></div>
      <div class="abs" style="left:1451px;top:36px;width:76px;height:1px;background:#e8e8e8"></div>
    </div>
    <div class="row alt" style="top:260px;height:40px;width:1527px">
      <div class="c" style="left:0px;width:41px"><span class="cb"></span></div>
      <div class="c" style="left:41px;width:90px"><span class="tag">已生效</span></div>
      <div class="c lk n" style="left:131px;width:160px">202506210001</div>
      <div class="c lk n" style="left:291px;width:160px">lilixd0114@yideat...</div>
      <div class="c n" style="left:451px;width:160px">GYS000003</div>
      <div class="c" style="left:611px;width:160px">会计师事务所</div>
      <div class="c n" style="left:771px;width:160px">2025-01-01</div>
      <div class="c n" style="left:931px;width:160px">2025-01-31</div>
      <div class="c r n" style="left:1091px;width:160px">252,449.94</div>
      <div class="c" style="left:1251px;width:200px;padding:0"><div class="sub n" style="top:0px">2025-01-15</div></div>
    </div>
    <div class="row " style="top:300px;height:74px;width:1527px">
      <div class="c" style="left:0px;width:41px"><span class="cb"></span></div>
      <div class="c" style="left:41px;width:90px"><span class="tag">已生效</span></div>
      <div class="c lk n" style="left:131px;width:160px">202407190001</div>
      <div class="c lk" style="left:291px;width:160px">享搭场景组</div>
      <div class="c n" style="left:451px;width:160px">202310270002</div>
      <div class="c" style="left:611px;width:160px">上海商贸</div>
      <div class="c n" style="left:771px;width:160px">2024-07-01</div>
      <div class="c n" style="left:931px;width:160px">2024-07-31</div>
      <div class="c r n" style="left:1091px;width:160px">5,200</div>
      <div class="c" style="left:1251px;width:200px;padding:0"><div class="sub b n" style="top:0px">2024-07-19</div><div class="sub n" style="top:37px">2024-07-02</div></div>
      <div class="abs" style="left:1451px;top:36px;width:76px;height:1px;background:#e8e8e8"></div>
    </div>
    <div class="row hov" style="top:374px;height:41px;width:1527px">
      <div class="c" style="left:0px;width:41px"><span class="cb"></span></div>
      <div class="c" style="left:41px;width:90px"><span class="tag">已生效</span></div>
      <div class="c lk n" style="left:131px;width:160px">202507140001</div>
      <div class="c lk" style="left:291px;width:160px">阿里云</div>
      <div class="c n" style="left:451px;width:160px">GYS000005</div>
      <div class="c" style="left:611px;width:160px">上海易点<svg class="abs" style="left:136px;top:9px" width="16" height="16" viewBox="0 0 16 16"><path d="M2.200 14.200 3 11.300 11.300 2.600 13.500 4.700 5.100 13.400z" fill="#c9c9c9" stroke="#777" stroke-width="1" stroke-linejoin="round"/><path d="M10.300 3.600 12.500 5.700 13.500 4.700 11.300 2.600z" fill="#666"/><path d="M2.200 14.200 3 11.300 5.100 13.400z" fill="#777"/></svg></div>
      <div class="c n" style="left:771px;width:160px">2025-07-13</div>
      <div class="c n" style="left:931px;width:160px">2025-07-31</div>
      <div class="c r n" style="left:1091px;width:160px">31,386.6</div>
      <div class="c" style="left:1251px;width:200px;padding:0"><div class="sub n" style="top:0px">2025-07-14</div></div>
    </div>
    <div class="row " style="top:415px;height:40px;width:1527px">
      <div class="c" style="left:0px;width:41px"><span class="cb"></span></div>
      <div class="c" style="left:41px;width:90px"><span class="tag">已生效</span></div>
      <div class="c lk n" style="left:131px;width:160px">202506180001</div>
      <div class="c lk" style="left:291px;width:160px">IT设备供应商</div>
      <div class="c n" style="left:451px;width:160px">GYS000004</div>
      <div class="c" style="left:611px;width:160px">武汉易点</div>
      <div class="c n" style="left:771px;width:160px">2024-11-01</div>
      <div class="c n" style="left:931px;width:160px">2024-11-30</div>
      <div class="c r n" style="left:1091px;width:160px">6,300</div>
      <div class="c" style="left:1251px;width:200px;padding:0"><div class="sub n" style="top:0px">2024-11-07</div></div>
    </div>
    <div class="row alt" style="top:455px;height:40px;width:1527px">
      <div class="c" style="left:0px;width:41px"><span class="cb"></span></div>
      <div class="c" style="left:41px;width:90px"><span class="tag">已生效</span></div>
      <div class="c lk n" style="left:131px;width:160px">202506220001</div>
      <div class="c lk n" style="left:291px;width:160px">lilixd0114@yideat...</div>
      <div class="c n" style="left:451px;width:160px">GYS000003</div>
      <div class="c" style="left:611px;width:160px">会计师事务所</div>
      <div class="c n" style="left:771px;width:160px">2025-06-01</div>
      <div class="c n" style="left:931px;width:160px">2025-06-30</div>
      <div class="c r n" style="left:1091px;width:160px">24,749.99</div>
      <div class="c" style="left:1251px;width:200px;padding:0"><div class="sub n" style="top:0px">2025-06-22</div></div>
    </div>
    <div class="abs" style="left:1527px;top:106px;width:17px;height:611px;background:#f1f1f1"></div>
    <svg class="abs" style="left:1532px;top:113px" width="8" height="4" viewBox="0 0 8 4"><path d="M0 4 4 0 8 4z" fill="#a3a3a3"/></svg>
    <svg class="abs" style="left:1532px;top:706px" width="8" height="4" viewBox="0 0 8 4"><path d="M0 0 4 4 8 0z" fill="#a3a3a3"/></svg>
    <div class="abs" style="left:1527px;top:37px;width:17px;height:69px;background:#f2f2f2;border-left:1px solid #e4e4e4"></div>
    <div class="abs" style="left:0;top:717px;width:1527px;height:18px;background:#f1f1f1"></div>
    <div class="abs" style="left:1527px;top:717px;width:17px;height:18px;background:#dcdcdc"></div>
    <div class="abs" style="left:17px;top:719px;width:503px;height:13px;background:#c1c1c1"></div>
    <svg class="abs" style="left:6px;top:722px" width="4" height="7" viewBox="0 0 4 7"><path d="M4 0 0 3.500 4 7z" fill="#a3a3a3"/></svg>
    <svg class="abs" style="left:1517px;top:722px" width="4" height="7" viewBox="0 0 4 7"><path d="M0 0 4 3.500 0 7z" fill="#404040"/></svg>
    <div id="foot" style="top:735px;width:1544px;height:53px">
      <svg class="abs" style="left:17px;top:20px" width="14" height="14" viewBox="0 0 14 14"><rect x=".7" y=".7" width="12.600" height="12.600" rx="1.800" fill="none" stroke="#666" stroke-width="1.300"/><path d="M7 3.200v7.600M5.300 4.800 7 3.100l1.700 1.700M5.300 9.200 7 10.900l1.700-1.700" fill="none" stroke="#555" stroke-width="1.100" stroke-linecap="round" stroke-linejoin="round"/></svg>
      <div class="abs" style="left:52px;top:13px;width:100px;height:28px;background:#fff;border:1px solid #e2e2e2;border-radius:3px"></div>
      <div class="abs" style="left:71px;top:17px;line-height:20px;font-size:13px;color:#30333a;white-space:nowrap">20条/页</div>
      <svg class="abs" style="left:134px;top:23px" width="11" height="8" viewBox="0 0 11 8"><path d="M1.200 1.800l4.300 4.300 4.300-4.300" fill="none" stroke="#cfcfcf" stroke-width="1.300" stroke-linecap="round" stroke-linejoin="round"/></svg>
      <div class="abs" style="left:167px;top:17px;line-height:20px;font-size:13px;color:#23262d;white-space:nowrap">共 8 条</div>
      <svg class="abs" style="left:1426px;top:21px" width="8" height="12" viewBox="0 0 8 12"><path d="M6 1.600 2 6l4 4.400" fill="none" stroke="#c6c6c6" stroke-width="1.900" stroke-linecap="round" stroke-linejoin="round"/></svg>
      <div class="abs" style="left:1455px;top:13px;width:30px;height:28px;border-radius:2px;background:#6982fa;color:#fff;font-weight:bold;font-size:14px;line-height:28px;text-align:center">1</div>
      <svg class="abs" style="left:1506px;top:21px" width="8" height="12" viewBox="0 0 8 12"><path d="M2 1.600 6 6l-4 4.400" fill="none" stroke="#c6c6c6" stroke-width="1.900" stroke-linecap="round" stroke-linejoin="round"/></svg>
    </div>
  </div>
</div>
<div class="abs" style="left:1903px;top:0;width:17px;height:942px;background:#f1f1f4"></div>
<div class="abs" style="left:1905px;top:17px;width:13px;height:749px;background:#c1c1c1"></div>
<svg class="abs" style="left:1907.500px;top:7px" width="8" height="4" viewBox="0 0 8 4"><path d="M0 4 4 0 8 4z" fill="#a3a3a3"/></svg>
<svg class="abs" style="left:1907.500px;top:931px" width="8" height="4" viewBox="0 0 8 4"><path d="M0 0 4 4 8 0z" fill="#404040"/></svg>
<div class="abs" style="left:1871px;top:547px;width:40px;height:40px;border-radius:50%;background:#cfe3f8;border:2px solid #eef0f3;box-shadow:0 1px 4px rgba(0,0,0,.28);overflow:hidden"><svg width="36" height="36" viewBox="0 0 36 36"><path d="M8 23.500C6.500 12 10 .800 20.500.300 28 0 32.500 5 32 13c-.2 3.500-.5 6.500-1.200 9.500l-4 1H12z" fill="#45302b"/><rect x="17" y="21" width="7" height="8" fill="#f0c9b8"/><ellipse cx="22" cy="15.500" rx="8.600" ry="9" fill="#f8dfd3"/><path d="M12.800 17C12 10 15 5.500 21 5.500c5.500 0 9.500 3 10.300 8.500-3.500-.3-7-2-9.300-5-1.500 3.500-4.500 6.500-9.200 8z" fill="#45302b"/><ellipse cx="16.800" cy="15.600" rx="1.400" ry="1.700" fill="#3a2020"/><ellipse cx="26" cy="15.600" rx="1.300" ry="1.700" fill="#3a2020"/><ellipse cx="21.400" cy="21.300" rx="1.300" ry=".7" fill="#e08a80"/><path d="M8.500 30c2-2 5-3 8.500-3 1 1.600 2.400 2.300 3.800 2.300s2.700-.7 3.500-2.300c3 0 5 .8 6 2.600-2 3-6 4.600-11 4.600s-9-1.500-10.800-4.200z" fill="#1b1b1f"/></svg></div>
</body>
</html>
